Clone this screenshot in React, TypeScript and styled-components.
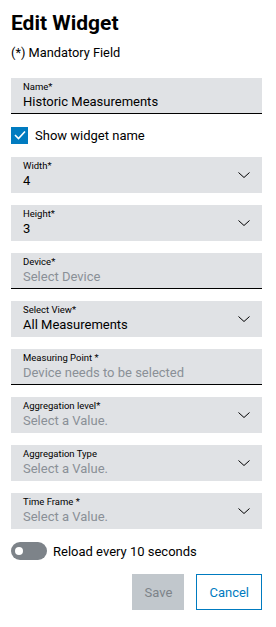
import React, { useState } from 'react';
import styled, { createGlobalStyle } from 'styled-components';

const GlobalStyle = createGlobalStyle`
  * { box-sizing: border-box; }
  body {
    margin: 0;
    background: #ffffff;
    font-family: Roboto, "Noto Sans", Arial, sans-serif;
    color: #000000;
  }
`;

const Page = styled.div`
  width: 276px;
  padding: 10px 14px 16px 11px;
  display: flex;
  flex-direction: column;
`;

const Title = styled.h1`
  margin: 0;
  font-size: 21px;
  line-height: 26px;
  font-weight: 700;
`;

const Hint = styled.div`
  margin-top: 9px;
  font-size: 12.8px;
  line-height: 16px;
`;

const Fields = styled.div`
  margin-top: 17px;
  display: flex;
  flex-direction: column;
  gap: 12px;
`;

const Field = styled.div<{ underline?: boolean }>`
  position: relative;
  height: 36px;
  background: #e0e2e5;
  padding: 3px 40px 0 12px;
  border-bottom: ${(p) => (p.underline ? '1px solid #000000' : 'none')};
  display: flex;
  flex-direction: column;
`;

const Label = styled.div`
  font-size: 9.5px;
  line-height: 12px;
  color: #000000;
`;

const Value = styled.div<{ placeholder?: boolean }>`
  font-size: 13px;
  line-height: 18px;
  color: ${(p) => (p.placeholder ? '#8a9097' : '#000000')};
  white-space: nowrap;
`;

const Chevron = styled.svg`
  position: absolute;
  right: 12px;
  top: 14px;
`;

const CheckRow = styled.label`
  display: flex;
  align-items: center;
  gap: 7px;
  font-size: 13px;
  height: 18px;
  margin-bottom: 1px;
`;

const Box = styled.span`
  width: 17px;
  height: 17px;
  background: #007bc0;
  display: flex;
  align-items: center;
  justify-content: center;
`;

const ToggleRow = styled.div`
  margin-top: 13px;
  display: flex;
  align-items: center;
  gap: 6px;
  font-size: 13px;
`;

const Track = styled.span`
  width: 36px;
  height: 18px;
  border-radius: 9px;
  background: #7d8389;
  position: relative;
`;

const Knob = styled.span`
  position: absolute;
  left: 4px;
  top: 5px;
  width: 8px;
  height: 8px;
  border-radius: 50%;
  background: #ffffff;
`;

const Actions = styled.div`
  margin-top: 14px;
  display: flex;
  justify-content: flex-end;
  gap: 12px;
`;

const Button = styled.button<{ variant: 'disabled' | 'outline' }>`
  height: 36px;
  padding: 0 12px;
  font-family: inherit;
  font-size: 13px;
  border: ${(p) => (p.variant === 'outline' ? '1px solid #007bc0' : 'none')};
  background: ${(p) => (p.variant === 'outline' ? '#ffffff' : '#c1c7cc')};
  color: ${(p) => (p.variant === 'outline' ? '#007bc0' : '#7d8389')};
  min-width: 52px;
`;

const ChevronIcon = () => (
  <Chevron width="12" height="8" viewBox="0 0 12 8">
    <path d="M0.5 1.5 L6 6.5 L11.5 1.5" fill="none" stroke="#000" strokeWidth="1" />
  </Chevron>
);

interface FieldDef {
  label: string;
  value: string;
  placeholder?: boolean;
  select?: boolean;
  underline?: boolean;
}

const fields: FieldDef[] = [
  { label: 'Width*', value: '4', select: true },
  { label: 'Height*', value: '3', select: true },
  { label: 'Device*', value: 'Select Device', placeholder: true, underline: true },
  { label: 'Select View*', value: 'All Measurements', select: true },
  { label: 'Measuring Point *', value: 'Device needs to be selected', placeholder: true, underline: true },
  { label: 'Aggregation level*', value: 'Select a Value.', placeholder: true, select: true },
  { label: 'Aggregation Type', value: 'Select a Value.', placeholder: true, select: true },
  { label: 'Time Frame *', value: 'Select a Value.', placeholder: true, select: true },
];

export default function App() {
  const [show] = useState(true);
  return (
    <>
      <GlobalStyle />
      <Page>
        <Title>Edit Widget</Title>
        <Hint>(*) Mandatory Field</Hint>
        <Fields>
          <Field underline>
            <Label>Name*</Label>
            <Value>Historic Measurements</Value>
          </Field>
          <CheckRow>
            <Box>
              {show && (
                <svg width="12" height="10" viewBox="0 0 12 10">
                  <path d="M1 5 L4.5 8.5 L11 1.5" fill="none" stroke="#fff" strokeWidth="1.6" />
                </svg>
              )}
            </Box>
            Show widget name
          </CheckRow>
          {fields.map((f) => (
            <Field key={f.label} underline={f.underline}>
              <Label>{f.label}</Label>
              <Value placeholder={f.placeholder}>{f.value}</Value>
              {f.select && <ChevronIcon />}
            </Field>
          ))}
        </Fields>
        <ToggleRow>
          <Track>
            <Knob />
          </Track>
          Reload every 10 seconds
        </ToggleRow>
        <Actions>
          <Button variant="disabled">Save</Button>
          <Button variant="outline">Cancel</Button>
        </Actions>
      </Page>
    </>
  );
}
